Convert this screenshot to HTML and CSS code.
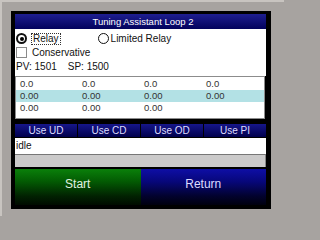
FILE: index.html
```html
<!DOCTYPE html>
<html>
<head>
<meta charset="utf-8">
<link rel="stylesheet" href="styles.css">
</head>
<body>
<div class="bezel">
  <div class="panel">
    <div class="title">Tuning Assistant Loop 2</div>
    <div class="settings">
      <div class="row radios">
        <div class="opt"><span class="radio on"></span><span class="label focus">Relay</span></div>
        <div class="opt opt2"><span class="radio"></span><span class="label">Limited Relay</span></div>
      </div>
      <div class="row checks">
        <span class="check"></span><span class="label">Conservative</span>
      </div>
      <div class="row pv">
        <span>PV: 1501</span><span class="sp">SP: 1500</span>
      </div>
    </div>
    <div class="table">
      <div class="trow"><span>0.0</span><span>0.0</span><span>0.0</span><span>0.0</span></div>
      <div class="trow hl"><span>0.00</span><span>0.00</span><span>0.00</span><span>0.00</span></div>
      <div class="trow"><span>0.00</span><span>0.00</span><span>0.00</span><span></span></div>
    </div>
    <div class="usebar">
      <div class="usebtn">Use UD</div>
      <div class="usebtn">Use CD</div>
      <div class="usebtn">Use OD</div>
      <div class="usebtn">Use PI</div>
    </div>
    <div class="status">idle</div>
    <div class="status2"></div>
    <div class="actions">
      <div class="btn start">Start</div>
      <div class="btn return">Return</div>
    </div>
  </div>
</div>
</body>
</html>
```

FILE: styles.css
```css
html, body {
  margin: 0;
  padding: 0;
  background: #a7a3a0;
  font-family: "Liberation Sans", Arial, sans-serif;
}

.bezel {
  width: 284px;
  height: 216px;
  box-sizing: border-box;
  padding: 9px 13px 7px 9px;
  background: #a7a3a0;
  border-left: 2px solid #c8c4c0;
  border-top: 2px solid #c8c4c0;
}

.panel {
  width: 260px;
  height: 198px;
  box-sizing: border-box;
  padding: 3px 5px 4px 4px;
  background: #000;
  display: flex;
  flex-direction: column;
}

.title {
  height: 15px;
  line-height: 15px;
  background: linear-gradient(#1e1e90, #02025c);
  color: #fff;
  font-size: 9.5px;
  text-align: center;
  padding-left: 5px;
}

.settings {
  height: 47px;
  box-sizing: border-box;
  background: #fff;
  padding: 4px 0 0 1px;
  display: flex;
  flex-direction: column;
  font-size: 10px;
  color: #111;
}

.row {
  display: flex;
  align-items: center;
}

.radios {
  height: 11px;
}

.opt {
  display: flex;
  align-items: center;
}

.opt2 {
  margin-left: 37px;
}

.radio {
  width: 11px;
  height: 11px;
  box-sizing: border-box;
  border: 1px solid #111;
  border-radius: 50%;
  background: #fff;
  position: relative;
}

.radio.on {
  border-width: 2px;
}

.radio.on::after {
  content: "";
  position: absolute;
  left: 1.5px;
  top: 1.5px;
  width: 4px;
  height: 4px;
  border-radius: 50%;
  background: #000;
}

.label {
  line-height: 11px;
}

.opt .label {
  margin-left: 2px;
}

.focus {
  margin-left: 4px !important;
  padding: 0 1px;
  border: 1px dotted #333;
  line-height: 10px;
}

.checks {
  margin-top: 3px;
  height: 11px;
}

.check {
  width: 11px;
  height: 11px;
  box-sizing: border-box;
  border: 1px solid #8a8a8a;
  background: #fff;
}

.checks .label {
  margin-left: 5px;
}

.pv {
  margin-top: 4px;
  height: 10px;
  line-height: 10px;
}

.sp {
  margin-left: 11px;
}

.table {
  height: 43px;
  box-sizing: border-box;
  background: #fff;
  border: 1px solid #8c8c8c;
  padding-top: 1px;
  margin-right: 1px;
}

.trow {
  display: grid;
  grid-template-columns: repeat(4, 1fr);
  height: 12px;
  line-height: 12px;
  font-size: 9.5px;
  color: #333;
}

.trow span {
  padding-left: 4px;
}

.trow.hl {
  background: #b3e1e5;
}

.usebar {
  margin-top: 5px;
  height: 13px;
  display: flex;
  gap: 1px;
}

.usebtn {
  flex: 1;
  background: linear-gradient(#16168a, #00004c);
  color: #dedcff;
  font-size: 10px;
  line-height: 13px;
  text-align: center;
}

.status {
  margin-top: 1px;
  height: 16px;
  line-height: 15px;
  background: #fff;
  font-size: 10px;
  color: #111;
  padding-left: 1px;
}

.status2 {
  height: 13px;
  box-sizing: border-box;
  background: #cbcaca;
  border-top: 1px solid #777;
  border-right: 1px solid #888;
}

.actions {
  margin-top: 2px;
  height: 36px;
  display: flex;
}

.btn {
  flex: 1;
  font-size: 12px;
  line-height: 31px;
  text-align: center;
}

.start {
  background: linear-gradient(#0a800a, #035a03 35%, #012201 75%, #000a00);
  color: #e2f2e2;
}

.return {
  background: linear-gradient(#0e0ea6, #07077a 35%, #02022e 75%, #00000e);
  color: #dcdcff;
}
```
